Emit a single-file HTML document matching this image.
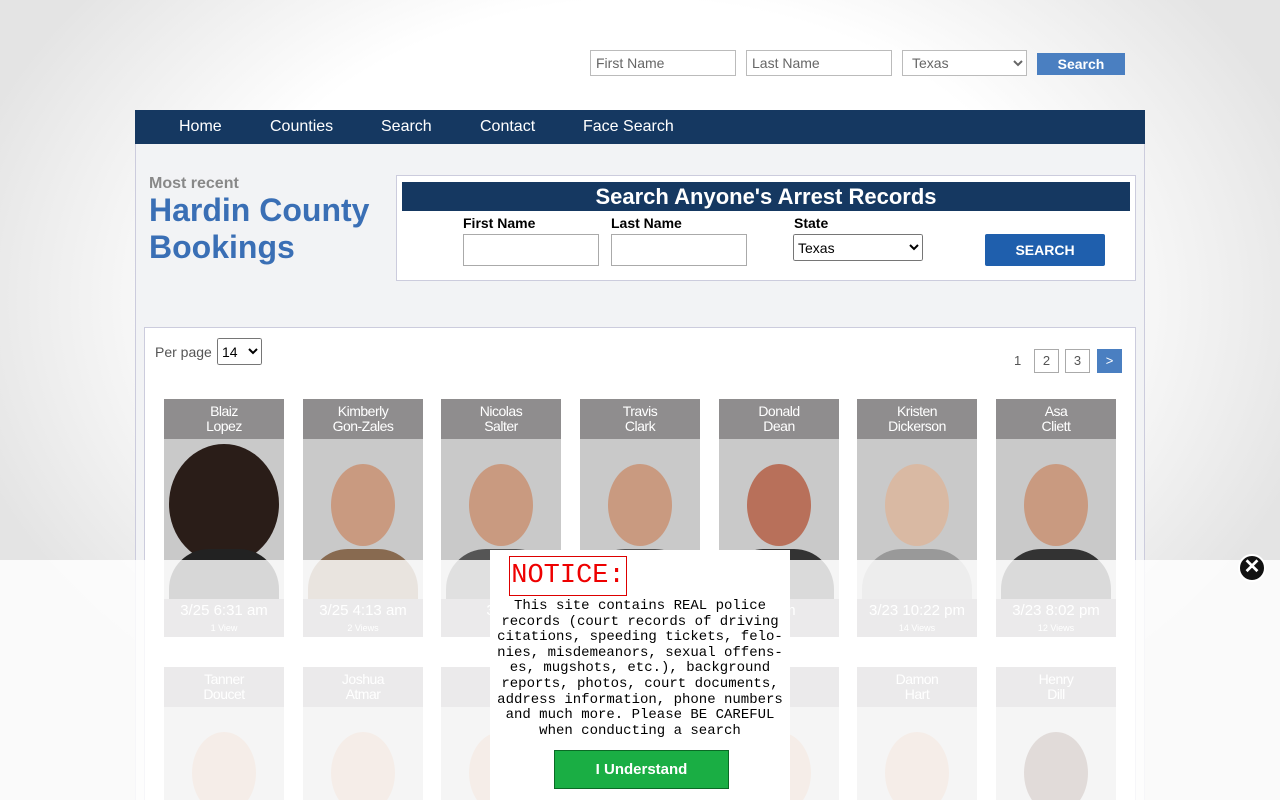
<!DOCTYPE html>
<html style="width:1280px;height:800px;overflow:hidden"><head><meta charset="utf-8"><style>
*{box-sizing:border-box;margin:0;padding:0}
body{width:1280px;height:800px;overflow:hidden;font-family:"Liberation Sans",Arial,sans-serif;background:radial-gradient(ellipse 700px 500px at 640px 300px,#fff 60%,#e4e4e4 100%);position:relative}
#clip{position:absolute;left:0;top:0;width:1280px;height:800px;overflow:hidden}
.top input,.top select{position:absolute;height:26px;border:1px solid #bbb;background:#fff;font:14px "Liberation Sans";color:#666;padding:0 5px}
.wrap{position:absolute;left:135px;top:110px;width:1010px;height:690px;background:#f2f3f5;border:1px solid #ccd;border-top:0;border-bottom:0}
.nav{height:34px;background:#153861;position:relative;margin:0 -1px}
.nav span{position:absolute;top:8px;color:#fff;font-size:16px}
.mr{position:absolute;left:13px;top:65px;color:#888;font-weight:bold;font-size:16px}
.h1{position:absolute;left:13px;top:82px;color:#3a6fb5;font-weight:bold;font-size:32px;line-height:37px}
.sbox{position:absolute;left:260px;top:65px;width:740px;height:106px;background:#fff;border:1px solid #ccd}
.sbar{position:absolute;left:5px;top:6px;width:728px;height:29px;background:#153861;color:#fff;font-weight:bold;font-size:22px;text-align:center;line-height:29px}
.lb{position:absolute;top:39px;font-weight:bold;font-size:14px}
.in{position:absolute;top:58px;width:136px;height:32px;border:1px solid #aaa;background:#fff}
.list{position:absolute;left:8px;top:217px;width:992px;height:473px;background:#fff;border:1px solid #ccd;border-bottom:0}
.card{position:absolute;width:120px;height:238px;background:#ddd;overflow:hidden}
.card .n{height:40px;background:#8f8d8e;color:#fff;font-size:14px;text-align:center;line-height:15px;padding-top:5px;letter-spacing:-.5px}
.card .p{height:160px;background:#c9c9c9;position:relative;overflow:hidden}
.card .p i{position:absolute;left:28px;top:25px;width:64px;height:82px;border-radius:50%;background:#c99a80}
.card .p b{position:absolute;left:5px;top:110px;width:110px;height:80px;border-radius:40px 40px 0 0;background:#555}
.card .f{height:38px;background:#8f8d8e;color:#fff;text-align:center;font-size:15px;padding-top:3px}
.card .f small{display:block;font-size:9px;margin-top:4px}
.r2{height:133px}
.ov{position:absolute;left:0;top:560px;width:1280px;height:240px;background:rgba(255,255,255,.82)}
.pg{position:absolute;top:21px;width:25px;height:24px;border:1px solid #aaa;font-size:13px;text-align:center;line-height:22px;color:#555;background:#fff}
</style></head><body><div id="clip">
<div class="top">
<input style="left:590px;top:50px;width:146px" value="First Name">
<input style="left:746px;top:50px;width:146px" value="Last Name">
<select style="left:902px;top:50px;width:125px"><option>Texas</option></select>
<div style="position:absolute;left:1037px;top:53px;width:88px;height:22px;background:#4a7fc1;color:#fff;font-weight:bold;font-size:14px;text-align:center;line-height:22px">Search</div>
</div>
<div class="wrap">
<div class="nav"><span style="left:44px">Home</span><span style="left:135px">Counties</span><span style="left:246px">Search</span><span style="left:345px">Contact</span><span style="left:448px">Face Search</span></div>
<div class="mr">Most recent</div>
<div class="h1">Hardin County<br>Bookings</div>
<div class="sbox"><div class="sbar">Search Anyone's Arrest Records</div>
<div class="lb" style="left:66px">First Name</div><div class="lb" style="left:214px">Last Name</div><div class="lb" style="left:397px">State</div>
<div class="in" style="left:66px"></div><div class="in" style="left:214px"></div>
<select style="position:absolute;left:396px;top:58px;width:130px;height:27px;font:14px 'Liberation Sans'"><option>Texas</option></select>
<div style="position:absolute;left:588px;top:58px;width:120px;height:32px;background:#1f5fad;color:#fff;font-weight:bold;font-size:14px;text-align:center;line-height:32px;border-radius:2px">SEARCH</div>
</div>
<div class="list">
<div style="position:absolute;left:10px;top:16px;font-size:14px;color:#555">Per page</div>
<select style="position:absolute;left:72px;top:10px;width:45px;height:27px;font:14px 'Liberation Sans'"><option>14</option></select>
<div style="position:absolute;left:869px;top:25px;font-size:13px;color:#555">1</div>
<div class="pg" style="left:889px">2</div><div class="pg" style="left:920px">3</div>
<div class="pg" style="left:952px;background:#4a7fc1;color:#fff;border-color:#4a7fc1">&gt;</div>
</div>
</div>
<div class="card" style="left:164px;top:399px"><div class="n">Blaiz<br>Lopez</div><div class="p"><i style="background:#2a1d18;width:110px;left:5px;top:5px;height:120px"></i><b style="background:#222"></b></div><div class="f">3/25 6:31 am<small>1 View</small></div></div>
<div class="card" style="left:303px;top:399px"><div class="n">Kimberly<br>Gon-Zales</div><div class="p"><i></i><b style="background:#886a50"></b></div><div class="f">3/25 4:13 am<small>2 Views</small></div></div>
<div class="card" style="left:441px;top:399px"><div class="n">Nicolas<br>Salter</div><div class="p"><i></i><b></b></div><div class="f">3/25<small></small></div></div>
<div class="card" style="left:580px;top:399px"><div class="n">Travis<br>Clark</div><div class="p"><i></i><b></b></div><div class="f"><small></small></div></div>
<div class="card" style="left:719px;top:399px"><div class="n">Donald<br>Dean</div><div class="p"><i style="background:#b8705a"></i><b style="background:#333"></b></div><div class="f">9 pm<small></small></div></div>
<div class="card" style="left:857px;top:399px"><div class="n">Kristen<br>Dickerson</div><div class="p"><i style="background:#d9b9a3"></i><b style="background:#999"></b></div><div class="f">3/23 10:22 pm<small>14 Views</small></div></div>
<div class="card" style="left:996px;top:399px"><div class="n">Asa<br>Cliett</div><div class="p"><i></i><b style="background:#333"></b></div><div class="f">3/23 8:02 pm<small>12 Views</small></div></div>
<div class="card r2" style="left:164px;top:667px"><div class="n">Tanner<br>Doucet</div><div class="p"><i></i></div></div>
<div class="card r2" style="left:303px;top:667px"><div class="n">Joshua<br>Atmar</div><div class="p"><i></i></div></div>
<div class="card r2" style="left:441px;top:667px"><div class="n">C<br>&nbsp;</div><div class="p"><i></i></div></div>
<div class="card r2" style="left:719px;top:667px"><div class="n">el<br>e</div><div class="p"><i></i></div></div>
<div class="card r2" style="left:857px;top:667px"><div class="n">Damon<br>Hart</div><div class="p"><i></i></div></div>
<div class="card r2" style="left:996px;top:667px"><div class="n">Henry<br>Dill</div><div class="p"><i style="background:#5a3a2e"></i></div></div>
<div class="ov"></div>
<div style="position:absolute;left:1238px;top:554px;width:28px;height:28px;border-radius:50%;background:#111;border:2px solid #fff;color:#fff;font-size:20px;font-weight:bold;text-align:center;line-height:23px">✕</div>
<div style="position:absolute;left:490px;top:550px;width:300px;height:250px;background:#fff;text-align:center;font-family:'Liberation Mono',monospace">
<div style="position:absolute;left:19px;top:6px;width:118px;height:40px;border:1px solid #d00;color:#e00;font-size:27px;line-height:38px">NOTICE:</div>
<div style="position:absolute;left:4px;top:49px;width:292px;font-size:14px;line-height:15.6px;color:#000">This site contains REAL police records (court records of driving citations, speeding tickets, felo-nies, misdemeanors, sexual offens-es, mugshots, etc.), background reports, photos, court documents, address information, phone numbers and much more. Please BE CAREFUL when conducting a search</div>
<div style="position:absolute;left:64px;top:200px;width:175px;height:39px;background:#1aae44;border:1px solid #0a6a25;color:#fff;font:bold 15px 'Liberation Sans';line-height:37px">I Understand</div>
</div>
</div></body></html>
